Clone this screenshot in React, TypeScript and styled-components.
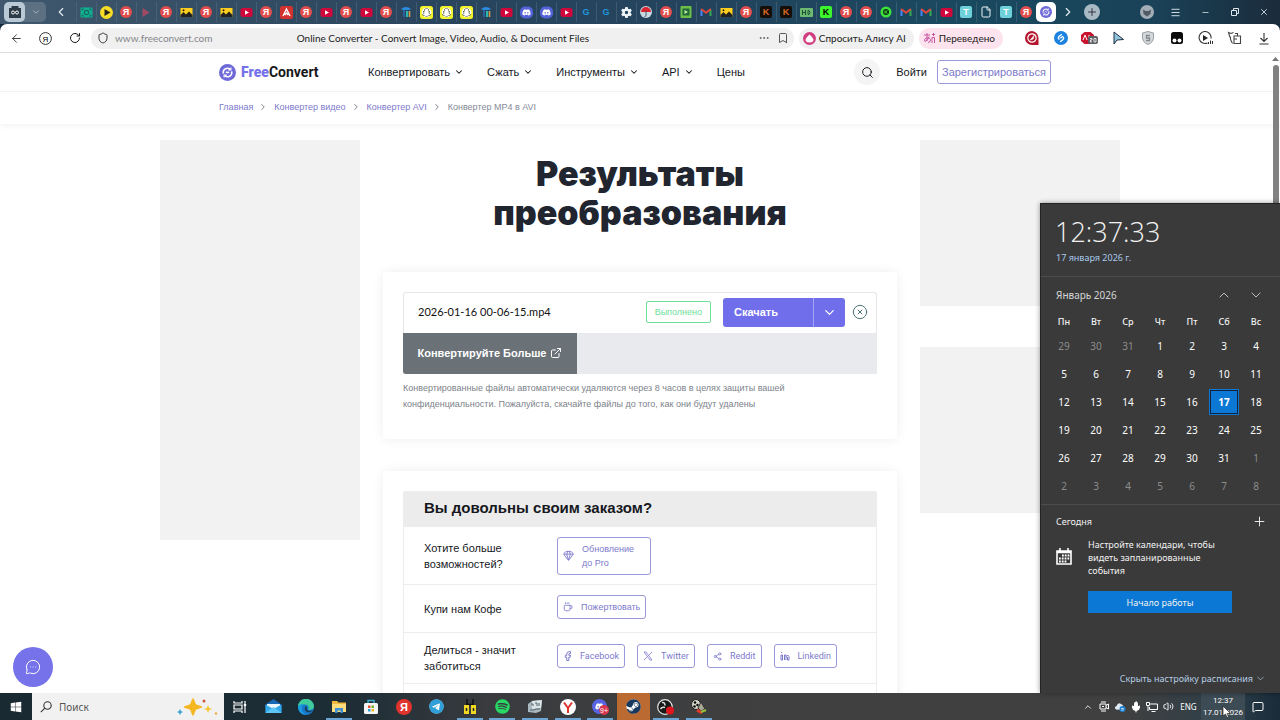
import React from "react";
import styled, { createGlobalStyle, css } from "styled-components";
import {
  ArrowLeft, RotateCw, Shield, Bookmark, ChevronDown, ChevronUp, ChevronLeft, ChevronRight,
  Search, CircleX, ExternalLink, Gem, Coffee, Share2, Plus, X, Menu, Minus, Ellipsis,
  MessageCircleMore, Mic, Volume2, MessageSquare, File,
} from "lucide-react";
import { FaSpotify, FaSteam, FaTelegram, FaDiscord, FaWindows, FaSnapchat, FaGear } from "react-icons/fa6";

const sans = '"Liberation Sans", Arial, sans-serif';
const chrome = 'Lato, Roboto, sans-serif';
const system = '"Noto Sans", "Open Sans", sans-serif';
const violet = "#7572ea";

const GlobalStyle = createGlobalStyle`
  * { box-sizing: border-box; }
  body { margin: 0; background: #fff; font-family: ${sans}; color: #16181d; overflow: hidden; }
  button, input { font: inherit; color: inherit; border: 0; padding: 0; margin: 0; background: none; }
  a { color: inherit; text-decoration: none; }
  h1, h2, p, ul, ol { margin: 0; padding: 0; }
  ul, ol { list-style: none; }
  svg { display: block; flex: none; }
`;

const Desktop = styled.div`
  position: relative;
  height: 100vh;
  display: flex;
  flex-direction: column;
`;

/* ---------- browser chrome ---------- */

const TabStrip = styled.div`
  height: 24px;
  flex: none;
  display: flex;
  align-items: center;
  color: #dfe8ee;
  background: linear-gradient(90deg, #40586d 0, #2b465e 30%, #23435d 55%, #19495f 76%, #1a4258 90%, #1b2c3c 100%);
`;
const TabGroup = styled.div`
  display: flex;
  margin-left: 4px;
  height: 20px;
  border-radius: 5px;
  background: #5b7083;
`;
const GroupButton = styled.button<{ $lit?: boolean }>`
  width: 21px;
  height: 20px;
  display: grid;
  place-items: center;
  border-radius: 5px;
  background: ${(p) => (p.$lit ? "#b9c9d6" : "transparent")};
`;
const StripButton = styled.button<{ $w: number }>`
  width: ${(p) => p.$w}px;
  height: 22px;
  display: grid;
  place-items: center;
`;
const Tabs = styled.div`
  display: flex;
  height: 24px;
  align-items: center;
`;
const Tab = styled.button<{ $active?: boolean }>`
  width: 20px;
  height: 20px;
  display: grid;
  place-items: center;
  ${(p) => p.$active
    ? css`background: #fff; border-radius: 5px;`
    : css`box-shadow: inset 1px 0 #55708480;`}
`;
const NewTab = styled.button`
  width: 16px;
  height: 16px;
  margin: 0 8px 0 4px;
  border-radius: 50%;
  background: #a9bac4;
  color: #334;
  display: grid;
  place-items: center;
`;
const WindowControls = styled.div`
  margin-left: auto;
  margin-right: 1px;
  display: flex;
  align-items: center;
`;
const Letter = styled.span<{ $bg: string; $fg?: string; $round?: boolean }>`
  width: 12px;
  height: 12px;
  display: grid;
  place-items: center;
  border-radius: ${(p) => (p.$round ? "50%" : "2px")};
  background: ${(p) => p.$bg};
  color: ${(p) => p.$fg ?? "#fff"};
  font: 700 9px/12px ${sans};
`;

const ToolbarBack = styled.div`
  flex: none;
  background: #14283c;
`;
const Toolbar = styled.div`
  height: 29px;
  display: flex;
  align-items: center;
  padding: 0 2px;
  background: #fff;
  border-bottom: 1px solid #dedede;
  border-radius: 7px 7px 0 0;
  font: 10px/16px ${chrome};
  color: #1b1b1b;
`;
const ToolButton = styled.button`
  width: 29px;
  height: 22px;
  display: grid;
  place-items: center;
`;
const AddressBar = styled.div`
  flex: 1;
  min-width: 0;
  height: 21px;
  margin-left: 2px;
  padding: 0 5px 0 6px;
  display: grid;
  grid-template-columns: 1fr auto 1fr;
  align-items: center;
  border-radius: 10px;
  background: #f0f0f0;
`;
const AddressStart = styled.label`
  display: flex;
  align-items: center;
  gap: 6px;
`;
const Url = styled.input`
  width: 120px;
  color: #85878a;
  outline: none;
`;
const AddressEnd = styled.div`
  display: flex;
  justify-content: flex-end;
  align-items: center;
  gap: 7px;
`;
const Pill = styled.button<{ $bg: string }>`
  height: 21px;
  margin-left: 5px;
  padding: 0 8px 0 4px;
  display: flex;
  align-items: center;
  gap: 3px;
  border-radius: 10px;
  white-space: nowrap;
  background: ${(p) => p.$bg};
`;
const Extensions = styled.div`
  display: flex;
  margin-left: 14px;
`;

/* ---------- web page ---------- */

const Page = styled.div`
  position: relative;
  flex: 1;
  min-height: 0;
  overflow: hidden;
  background: #fff;
`;
const ScrollTrack = styled.div`
  position: absolute;
  z-index: 2;
  top: 0;
  right: 1px;
  bottom: 0;
  width: 7px;
  display: flex;
  flex-direction: column;
  align-items: center;
  padding-top: 4px;
  gap: 4px;
`;
const ScrollThumb = styled.div`
  width: 6px;
  height: 200px;
  border-radius: 3px;
  background: #828282;
`;
const Container = styled.div`
  width: 100%;
  max-width: 960px;
  margin: 0 auto;
`;
const SiteHeader = styled.header`
  border-bottom: 1px solid #f5f5f6;
`;
const HeaderRow = styled(Container)`
  height: 38px;
  padding: 0 69px 0 59px;
  display: flex;
  align-items: center;
`;
const Logo = styled.a`
  width: 149px;
  display: flex;
  align-items: center;
  gap: 5px;
  font: 700 14px/18px Roboto, sans-serif;
  color: #17171c;
  b { color: ${violet}; }
`;
const Nav = styled.nav`
  display: flex;
  gap: 23px;
  font-size: 11px;
  line-height: 16px;
`;
const NavItem = styled.button`
  display: flex;
  align-items: center;
  gap: 4px;
`;
const Account = styled.div`
  margin-left: auto;
  display: flex;
  align-items: center;
  font-size: 11px;
`;
const RoundButton = styled.button`
  width: 26px;
  height: 26px;
  border-radius: 50%;
  display: grid;
  place-items: center;
  background: #f4f4f4;
`;
const LoginLink = styled.a`
  margin: 0 10px 0 16px;
`;
const OutlineButton = styled.button<{ $large?: boolean; $latin?: boolean }>`
  display: inline-flex;
  align-items: center;
  gap: 8px;
  padding: 4px ${(p) => (p.$large ? 4 : 5)}px;
  min-height: 24px;
  border: 1px solid #9a98d8;
  border-radius: 3px;
  color: #7d7acb;
  background: #fff;
  font-family: ${(p) => (p.$latin ? "Roboto, sans-serif" : "inherit")};
  font-size: ${(p) => (p.$large ? 11 : 9)}px;
  line-height: 14px;
  text-align: left;
`;
const Crumbs = styled.nav`
  box-shadow: 0 2px 6px #0000000d;
`;
const CrumbRow = styled.ol`
  max-width: 960px;
  height: 32px;
  margin: 0 auto;
  padding: 0 0 2px 59px;
  display: flex;
  align-items: center;
  font-size: 9px;
  color: #7d7acb;
  li { display: flex; align-items: center; gap: 5px; margin-right: 6px; }
  li:last-child { color: #858b97; }
  svg { color: #666b76; }
`;
const Columns = styled(Container)`
  display: grid;
  grid-template-columns: 200px minmax(0, 1fr) 200px;
  column-gap: 23px;
  padding-top: 16px;
`;
const AdColumn = styled.aside`
  display: flex;
  flex-direction: column;
  gap: 41px;
`;
const Ad = styled.div<{ $h: number }>`
  height: ${(p) => p.$h}px;
  background: #f2f2f2;
`;
const Title = styled.h1`
  margin: 14px auto 40px;
  max-width: 400px;
  text-align: center;
  font: 900 34px/39px Inter, sans-serif;
  color: #21252f;
`;
const Card = styled.section`
  margin-bottom: 32px;
  padding: 20px 20px 27px;
  border-radius: 4px;
  background: #fff;
  box-shadow: 0 0 12px #00000012;
`;
const FileRow = styled.div`
  height: 41px;
  padding: 0 8px 2px 14px;
  display: flex;
  align-items: center;
  border: 1px solid #e6e6ea;
  border-bottom: 0;
  border-radius: 3px 3px 0 0;
`;
const FileName = styled.span`
  flex: 1;
  font: 11px/16px ${chrome};
  color: #111;
`;
const Status = styled.span`
  padding: 3px 8px;
  border: 1px solid #6ee09a;
  border-radius: 2px;
  color: #6ee09a;
  font-size: 9px;
  line-height: 14px;
`;
const SplitButton = styled.div`
  display: flex;
  width: 122px;
  height: 29px;
  margin: 0 7px 0 12px;
  border-radius: 3px;
  overflow: hidden;
  background: #716eeb;
  color: #fff;
  font-size: 11px;
  font-weight: 700;
`;
const DownloadButton = styled.button`
  flex: 1;
  padding-left: 11px;
  text-align: left;
`;
const DownloadMenu = styled.button`
  width: 32px;
  display: grid;
  place-items: center;
  border-left: 1px solid #a5a3f2;
`;
const MoreBar = styled.div`
  background: #e8eaee;
`;
const MoreButton = styled.button`
  height: 41px;
  width: 174px;
  display: flex;
  align-items: center;
  justify-content: center;
  gap: 4px;
  padding-bottom: 2px;
  background: #6a7278;
  color: #fff;
  font-size: 11px;
  font-weight: 700;
  border-bottom-left-radius: 3px;
`;
const Note = styled.p`
  margin-top: 6px;
  max-width: 420px;
  font-size: 9px;
  line-height: 16px;
  color: #7c828a;
`;
const Survey = styled.div`
  border: 1px solid #ececee;
  border-top: 0;
  border-radius: 3px 3px 0 0;
`;
const SurveyTitle = styled.h2`
  height: 36px;
  padding-left: 20px;
  background: #ececec;
  font-size: 15px;
  line-height: 34px;
  color: #16181d;
`;
const SurveyRow = styled.div<{ $h: number }>`
  min-height: ${(p) => p.$h}px;
  padding-left: 20px;
  display: grid;
  grid-template-columns: 133px 1fr;
  align-items: center;
  border-bottom: 1px solid #ececee;
  font-size: 11px;
  line-height: 16px;
`;
const SurveyLabel = styled.span`
  max-width: 100px;
`;
const Actions = styled.div<{ $raised?: boolean }>`
  display: flex;
  gap: 12px;
  padding-bottom: ${(p) => (p.$raised ? 4 : 0)}px;
`;
const ProText = styled.span`
  width: 63px;
`;
const ChatButton = styled.button`
  position: absolute;
  left: 13px;
  bottom: 6px;
  width: 40px;
  height: 40px;
  border-radius: 50%;
  display: grid;
  place-items: center;
  background: ${violet};
  color: #fff;
`;

/* ---------- calendar flyout ---------- */

const Flyout = styled.section`
  position: absolute;
  z-index: 3;
  right: 0;
  bottom: 27px;
  width: 240px;
  height: 490px;
  display: flex;
  flex-direction: column;
  background: #3a3a3a;
  color: #f2f2f2;
  font: 9px/13px ${system};
  border-left: 1px solid #232323;
  border-top: 1px solid #232323;
  box-shadow: 0 0 5px #0006;
`;
const ClockHead = styled.div`
  height: 73px;
  padding: 10px 14px 0;
  border-bottom: 1px solid #4d4d4d;
`;
const BigTime = styled.div`
  font: 300 27px/36px "Open Sans", sans-serif;
`;
const LongDate = styled.a`
  display: block;
  padding: 1px;
  color: #a9c9ea;
`;
const MonthBar = styled.div`
  height: 36px;
  padding: 0 8px 0 15px;
  display: flex;
  align-items: center;
  color: #d5d5d5;
  font-size: 10px;
`;
const MonthName = styled.button`
  margin-right: auto;
`;
const IconButton = styled.button<{ $w?: number }>`
  width: ${(p) => p.$w ?? 32}px;
  height: 24px;
  display: grid;
  place-items: center;
`;
const Calendar = styled.table`
  width: 224px;
  margin: 0 8px 4px 7px;
  table-layout: fixed;
  border-collapse: collapse;
  text-align: center;
  th { height: 19px; padding: 0 0 2px; font-weight: 500; }
  td { height: 28px; padding: 0; font-size: 10px; }
`;
const Day = styled.button<{ $dim?: boolean; $today?: boolean }>`
  width: 28px;
  height: 24px;
  color: ${(p) => (p.$dim ? "#8c8c8c" : "#fff")};
  ${(p) => p.$today && css`
    background: #0a78d4;
    border: 1px solid #14233a;
    outline: 1px solid #0a78d4;
    font-weight: 700;
  `}
`;
const Agenda = styled.div`
  flex: 1;
  display: flex;
  flex-direction: column;
  border-top: 1px solid #4d4d4d;
`;
const AgendaHead = styled.div`
  height: 33px;
  padding: 0 6px 0 15px;
  display: flex;
  align-items: center;
  justify-content: space-between;
`;
const AgendaBody = styled.div`
  display: grid;
  grid-template-columns: 32px 144px;
  padding-left: 15px;
  row-gap: 14px;
  svg { margin-top: 10px; }
  p { max-width: 132px; }
`;
const StartButton = styled.button`
  grid-column: 2;
  height: 22px;
  background: #0a78d4;
`;
const HideLink = styled.button`
  margin: auto 14px 8px auto;
  display: flex;
  align-items: center;
  gap: 2px;
  color: #b5cde4;
`;

/* ---------- taskbar ---------- */

const Taskbar = styled.footer`
  position: relative;
  flex: none;
  height: 27px;
  display: flex;
  background: linear-gradient(90deg, #192a33 0, #1d2d36 27%, #393b3e 38%, #404040 60%, #404040 88%, #2d3f4a 96%, #182b38 100%);
  color: #fff;
  font: 9px/12px ${system};
`;
const StartMenu = styled.button`
  width: 32px;
  display: grid;
  place-items: center;
`;
const SearchBox = styled.label`
  width: 192px;
  padding: 0 6px 0 8px;
  display: flex;
  align-items: center;
  gap: 7px;
  background: #f1f1f1;
  color: #333;
  input { flex: 1; min-width: 0; font-size: 10px; outline: none; }
  input::placeholder { color: #555; opacity: 1; }
`;
const Apps = styled.div`
  display: flex;
  width: 491px;
`;
const AppButton = styled.button<{ $open?: boolean; $alert?: boolean }>`
  display: flex;
  flex: 1;
  flex-direction: column;
  justify-content: center;
  align-items: center;
  background: ${(p) => (p.$alert ? "#bb6a31" : "transparent")};
  ${(p) => p.$open && css`
    background: linear-gradient(#6aa5d5, #6aa5d5) center bottom / 26px 2px no-repeat;
  `}
`;
const Tray = styled.div`
  margin-left: auto;
  display: flex;
  align-items: stretch;
`;
const TrayIcon = styled.button`
  width: 16px;
  display: grid;
  place-items: center;
`;
const Lang = styled.button`
  width: 25px;
  font-size: 8px;
`;
const Clock = styled.button`
  width: 44px;
  font: 8px/12px Roboto, sans-serif;
  white-space: nowrap;
  display: flex;
  flex-direction: column;
  align-items: center;
  justify-content: center;
  background: #3d4b54;
`;
const ActionCenter = styled.button`
  width: 35px;
  padding-right: 9px;
  display: grid;
  place-items: center;
`;
const Pointer = styled.svg`
  position: absolute;
  right: 48px;
  bottom: 2px;
`;

/* ---------- drawings ---------- */

const ConvertMark = ({ size = 17 }: { size?: number }) => (
  <svg width={size} height={size} viewBox="0 0 18 18">
    <circle cx="9" cy="9" r="9" fill="#6d69d8" />
    <g fill="none" stroke="#fff" strokeWidth="1.6">
      <path d="M4.600 10.200A4.600 4.600 0 0 1 11.800 5.400M13.400 7.800A4.600 4.600 0 0 1 6.200 12.600" />
      <path d="M12.600 3.600v2.600h-2.800M5.400 14.400v-2.600h2.800M7.200 9.400l1.200-1.200 1 1.200 1.400-1.200" strokeWidth="1.200" />
    </g>
  </svg>
);
const YaMark = () => <Letter $bg="#e14d4c" $round>Я</Letter>;
const Tube = () => (
  <svg width="13" height="13" viewBox="0 0 13 13"><rect x=".5" y="2" width="12" height="9" rx="2.5" fill="#d1063a" /><path d="M5 4.300v4.400l4-2.200z" fill="#fff" /></svg>
);
const Mountains = () => (
  <svg width="13" height="13" viewBox="0 0 13 13"><rect x=".5" y="2" width="12" height="9" fill="#ffcd1c" /><path d="M.5 11V9l3-3 2.500 2.500L9 5.500l3.500 3.500v2z" fill="#222" /><circle cx="3.500" cy="4.300" r="1" fill="#222" /></svg>
);
const Ghost = () => (
  <svg width="13" height="13" viewBox="0 0 13 13"><rect width="13" height="13" rx="2.500" fill="#f2f32a" /><circle cx="6.500" cy="6.500" r="4.800" fill="#fff" /><FaSnapchat x={2} y={2} size={9} color="#33350c" /></svg>
);
const Mail = () => (
  <svg width="12" height="12" viewBox="0 0 12 12"><path d="M1.500 10V3.500" stroke="#4285f4" strokeWidth="2" /><path d="M10.500 10V3.500" stroke="#34a853" strokeWidth="2" /><path d="M1.200 3 6 6.800 10.800 3" fill="none" stroke="#e2463b" strokeWidth="2" /></svg>
);
const Bars = () => (
  <svg width="12" height="12" viewBox="0 0 12 12"><path d="M1 3Q6-1 11 3l-2 1H3z" fill="#2a8be0" /><path d="M4 4v7" stroke="#27639f" strokeWidth="2" /><path d="M7 5v6" stroke="#2cb7b0" strokeWidth="2" /><path d="M9.500 5v6" stroke="#d59f4a" strokeWidth="1.600" /></svg>
);
const Discord = () => (
  <svg width="13" height="13" viewBox="0 0 13 13"><rect y=".5" width="13" height="12" rx="5" fill="#5663d8" /><FaDiscord x={2} y={2} size={9} color="#fff" /></svg>
);
const Money = () => (
  <svg width="13" height="13" viewBox="0 0 13 13"><rect x=".5" y="1.500" width="12" height="10" rx="1" fill="#11b090" /><path d="M2 4.500V3h2M2 8.500V10h2M11 4.500V3H9M11 8.500V10H9" fill="none" stroke="#146a63" /><circle cx="6.500" cy="6.500" r="2.200" fill="none" stroke="#146a63" strokeWidth="1.200" /></svg>
);
const PlayDisc = () => (
  <svg width="13" height="13" viewBox="0 0 13 13"><circle cx="6.500" cy="6.500" r="6.500" fill="#f6dc27" /><path d="M4.500 3v7l6-3.500z" fill="#222" /></svg>
);
const DimPlay = () => (
  <svg width="13" height="13" viewBox="0 0 13 13"><path d="M2.500 2v9l7-4.500z" fill="#a04a66" /></svg>
);
const RedA = () => (
  <svg width="13" height="13" viewBox="0 0 13 13"><rect width="13" height="13" rx="2.500" fill="#d4322f" /><path d="M3 10 6.500 3 10 10M4.800 9l1.700-2 1.700 2" fill="none" stroke="#fff" strokeWidth="1.400" /></svg>
);
const Umbrella = () => (
  <svg width="12" height="12" viewBox="0 0 12 12"><circle cx="6" cy="6" r="6" fill="#c9d9e2" /><path d="M1 6a5 5 0 0 1 10 0z" fill="#d9252f" /><path d="M6 5v4.500q0 1-1.500 1" fill="none" stroke="#456" /></svg>
);
const GreenVideo = () => (
  <svg width="12" height="12" viewBox="0 0 12 12"><rect x=".5" width="11" height="12" rx="1" fill="#6cc04a" /><rect x="2.500" y="2.500" width="7" height="7" fill="#22663a" /><path d="M4.500 4v4L8 6z" fill="#bff09a" /></svg>
);
const KickDark = () => <Letter $bg="#150d08" $fg="#d8692a">K</Letter>;
const TealT = () => <Letter $bg="#6ed0da">T</Letter>;
const BlueG = () => <Letter $bg="transparent" $fg="#1f95dc">G</Letter>;
const Hd = () => (
  <svg width="13" height="13" viewBox="0 0 13 13"><rect y="2" width="13" height="9" rx="1" fill="#6cba72" /><path d="M2.500 4v5M5.500 4v5M2.500 6.500h3M8 4.500v4h1q2-2 0-4z" stroke="#1b5034" fill="none" /></svg>
);
const GreenDisc = () => (
  <svg width="12" height="12" viewBox="0 0 12 12"><circle cx="6" cy="6" r="5.500" fill="#3be33b" /><circle cx="6" cy="6" r="3" fill="#102a12" /><path d="M5 4.500v3M7.500 4.500 5.500 6l2 1.500" stroke="#3be33b" fill="none" /></svg>
);

const tabIcons: React.ComponentType[] = [
  Money, PlayDisc, YaMark, DimPlay, YaMark, Mountains, YaMark, Mountains, Tube, YaMark, RedA, YaMark, Tube, YaMark,
  Tube, YaMark, Bars, Ghost, Ghost, Ghost, Bars, Tube, Discord, Discord, Tube, BlueG, BlueG,
  () => <FaGear size={11} color="#f0f5f8" />, Umbrella, YaMark, GreenVideo, Mail, Mountains, YaMark,
  KickDark, KickDark, Hd, () => <Letter $bg="#3df52c" $fg="#000">K</Letter>, YaMark, YaMark, GreenDisc,
  Mail, Mail, Tube, TealT, () => <File size={12} color="#eef3f6" />, TealT, YaMark,
];

const extensions: [string, React.ReactNode][] = [
  ["Блокировщик", <svg width="14" height="14" viewBox="0 0 14 14"><path d="M7 0a7 7 0 1 0 0 14h6.500V7A7 7 0 0 0 7 0z" fill="#b5142c" /><circle cx="7" cy="7" r="4.200" fill="none" stroke="#fff" strokeWidth="1.200" /><path d="M5.200 9 9 4.500 8.200 8z" fill="#fff" stroke="#fff" strokeWidth=".6" /></svg>],
  ["Shazam", <svg width="14" height="14" viewBox="0 0 14 14"><circle cx="7" cy="7" r="7" fill="#1b82e0" /><path d="M7.800 3.200 5 5.500Q3.500 7.200 5.500 8.500M6.200 10.800 9 8.500Q10.500 6.800 8.500 5.500L6.300 7.200" fill="none" stroke="#fff" strokeWidth="1.400" /></svg>],
  ["Adblock", <svg width="17" height="14" viewBox="0 0 17 14"><path d="M3.500 1h6L13 4v6l-3.500 3h-6L0 10V4z" fill="#c9142d" /><path d="m2 9 2-5 2 5M8 4v5" stroke="#fff" fill="none" /><rect x="7" y="5" width="10" height="8" rx="2" fill="#5d6064" /><path d="M9 7.500h2v1.500H9.500V11H11M13 7.500h2V11h-2z" stroke="#fff" fill="none" strokeWidth=".8" /></svg>],
  ["Курсор", <svg width="13" height="14" viewBox="0 0 13 14"><path d="M2 1v12l3-4 6.500-.5z" fill="#8ec5dc" stroke="#1f2d45" /></svg>],
  ["Защита", <svg width="14" height="14" viewBox="0 0 14 14"><path d="M7 .5 12.500 2v5Q12 11.500 7 13.500 2 11.500 1.500 7V2z" fill="#d5d8db" stroke="#9a9ea3" /><path d="M9 4.500H5.500V7h3v2.500H5" fill="none" stroke="#83888d" strokeWidth="1.300" /></svg>],
  ["Tampermonkey", <svg width="14" height="14" viewBox="0 0 14 14"><rect x="1" y="1" width="12" height="12" rx="2.500" fill="#0b0b0b" /><circle cx="4.500" cy="9.500" r="2" fill="#fff" /><circle cx="9.500" cy="9.500" r="2" fill="#fff" /></svg>],
  ["Музыка", <svg width="15" height="14" viewBox="0 0 15 14"><path d="M9.500 12A6 6 0 1 1 13 7.500" fill="none" stroke="#333" strokeWidth="1.100" /><path d="M5 4v6l5-3z" fill="#222" /><path d="M10.500 13v-2M12.500 13V9.500M14.500 13v-3" stroke="#333" /></svg>],
  ["Расширения", <svg width="15" height="14" viewBox="0 0 15 14"><path d="M6.500 1.500 4 2.500 1.500 1.500 2.500 5Q4 6.500 3.500 8.500L5.500 12.500M7 5h6.500v7.500H7zM7 8h3M10.500 5V2.500H8" fill="none" stroke="#444" strokeWidth="1.100" /></svg>],
  ["Загрузки", <svg width="12" height="14" viewBox="0 0 12 14"><path d="M6 2v8.500M2.500 7 6 10.500 9.500 7M1.500 13h9" fill="none" stroke="#333" strokeWidth="1.100" /></svg>],
];

const weekdays = ["Пн", "Вт", "Ср", "Чт", "Пт", "Сб", "Вс"];
const weeks = Array.from({ length: 6 }, (_, w) =>
  Array.from({ length: 7 }, (_, d) => {
    const n = w * 7 + d - 2;
    return { n: n < 1 ? n + 31 : n > 31 ? n - 31 : n, dim: n < 1 || n > 31 };
  }),
);

type AppEntry = { name: string; icon: React.ReactNode; open?: boolean; alert?: boolean };
const apps: AppEntry[] = [
  { name: "Представление задач", icon: <svg width="14" height="12" viewBox="0 0 14 12"><path d="M1 0v2h8V0M1 12v-2h8v2M1 4h8v4H1zM12 0v12" fill="none" stroke="#fff" strokeWidth="1.200" /><path d="M10.800 4h2.400" stroke="#fff" strokeWidth="2" /></svg> },
  { name: "Почта", icon: <svg width="17" height="15" viewBox="0 0 17 15"><path d="M.5 5.500 8.500 0l8 5.500V14H.5z" fill="#1769b8" /><path d="M2 5h13v6H2z" fill="#e9f6fd" /><path d="M.5 5.500 8.500 10l8-4.500V14H.5z" fill="#34a9ea" /><path d="m.5 14 8-6 8 6z" fill="#5cc7f5" /></svg> },
  { name: "Edge", icon: <svg width="16" height="16" viewBox="0 0 16 16"><circle cx="8" cy="8" r="8" fill="#1878c9" /><path d="M0 8a8 8 0 0 1 16-.5c0 3-3.500 3.800-6 3 1.500-2 .5-5-3-5C4 5.500 1 6.500 0 8z" fill="#3fcb9a" /><path d="M0 8c1-2.500 3.500-3.500 6-3-3.500 2-3 8 1.500 11A8 8 0 0 1 0 8z" fill="#1b9be0" /><path d="M7 7.500q2-.5 2 1.500-.5 1.500.5 2 2.500 2 5 0-1 2-3 2.500Q5.500 13 7 7.500z" fill="#17405e" /></svg> },
  { name: "Проводник", open: true, icon: <svg width="16" height="14" viewBox="0 0 16 14"><path d="M1 1h5l1.500 1.500H15V12H1z" fill="#eeb83f" /><path d="M1 4h14v8H1z" fill="#fbdc7c" /><path d="M4 13V8h8v5h-2.500v-2.500h-3V13z" fill="#3f8fd4" /></svg> },
  { name: "Магазин", icon: <svg width="16" height="16" viewBox="0 0 16 16"><path d="M5 4V1.500h6V4" fill="none" stroke="#3db4d8" strokeWidth="1.300" /><rect x="1" y="4" width="14" height="11" rx="1.500" fill="#f5f5f5" /><path d="M5 6.500h2.500V9H5z" fill="#e4502c" /><path d="M8.500 6.500H11V9H8.500z" fill="#73b02c" /><path d="M5 10h2.500v2.500H5z" fill="#2a9fdb" /><path d="M8.500 10H11v2.500H8.500z" fill="#f0b323" /></svg> },
  { name: "Яндекс", icon: <svg width="16" height="16" viewBox="0 0 16 16"><circle cx="8" cy="8" r="8" fill="#e0342d" /><text x="8" y="12" textAnchor="middle" fill="#fff" fontFamily="Liberation Sans" fontWeight="700" fontSize="11">Я</text></svg> },
  { name: "Telegram", icon: <svg width="15" height="15" viewBox="0 0 15 15"><circle cx="7.500" cy="7.500" r="7" fill="#fff" /><FaTelegram size={15} color="#319fd8" /></svg> },
  { name: "Бинокль", open: true, icon: <svg width="14" height="15" viewBox="0 0 14 15"><path d="M4 0v6M10 0v6M3 5.500h8" stroke="#111" strokeWidth="1.500" /><rect x="1" y="6" width="5" height="9" fill="#f1d822" /><rect x="8" y="6" width="5" height="9" fill="#f1d822" /><path d="M3.500 9v3M10.500 9v3" stroke="#222" strokeWidth="1.500" /></svg> },
  { name: "Spotify", open: true, icon: <FaSpotify size={15} color="#27d865" /> },
  { name: "Игра", open: true, icon: <svg width="16" height="15" viewBox="0 0 16 15"><path d="m1 5 4-3 10-1-1 11-5 2-8-1z" fill="#a9b8bf" /><path d="m5 2 10-1-1 8-9 1z" fill="#dbe5e8" /><path d="M4 5h2v2M8 4h2v3M12 4v3M3 11h4l2-1h4" fill="none" stroke="#53636b" /></svg> },
  { name: "Яндекс Браузер", open: true, icon: <svg width="16" height="16" viewBox="0 0 16 16"><circle cx="8" cy="8" r="8" fill="#fff" /><path d="M4 3.500 8 9v5M12 3.500 8 9" fill="none" stroke="#e0342d" strokeWidth="2" /></svg> },
  { name: "Discord", open: true, icon: <svg width="17" height="16" viewBox="0 0 17 16"><circle cx="7.500" cy="7.500" r="7.500" fill="#5865e2" /><FaDiscord x={3} y={3} size={9} color="#fff" /><circle cx="12" cy="11" r="5" fill="#d8374f" /><text x="12" y="13.500" textAnchor="middle" fill="#fff" fontFamily="Liberation Sans" fontSize="7">9+</text></svg> },
  { name: "Steam", alert: true, icon: <svg width="15" height="15" viewBox="0 0 15 15"><circle cx="7.500" cy="7.500" r="7.200" fill="#fff" /><FaSteam size={15} color="#17375d" /></svg> },
  { name: "OBS", open: true, icon: <svg width="17" height="16" viewBox="0 0 17 16"><circle cx="8" cy="8" r="7.300" fill="#181818" stroke="#e8e8e8" strokeWidth="1.200" /><path d="M5 3.500q3-.5 3 3M3.500 10Q5 7.500 8 8.500" fill="none" stroke="#ddd" strokeWidth="1.500" /><circle cx="13" cy="11.500" r="4" fill="#e1161c" /></svg> },
  { name: "Редактор", open: true, icon: <svg width="17" height="16" viewBox="0 0 17 16"><ellipse cx="6" cy="5.500" rx="4.500" ry="5" fill="#d5d5c8" stroke="#222" /><circle cx="5" cy="3.500" r="1.200" /><circle cx="7.500" cy="6" r="1.200" /><circle cx="4.500" cy="7.500" r="1.200" /><path d="m8 9 3-6 4 7-4 2z" fill="#aaa996" stroke="#333" /><path d="m7 11 5 3" stroke="#e13a28" strokeWidth="3" /><path d="m11 13 5-2" stroke="#9ac43a" strokeWidth="2" /></svg> },
];

const NavEntry = ({ label, menu = true }: { label: string; menu?: boolean }) => (
  <NavItem type="button">{label}{menu && <ChevronDown size={10} strokeWidth={2.500} />}</NavItem>
);

export default function App() {
  return (
    <Desktop>
      <GlobalStyle />
      <TabStrip>
        <TabGroup>
          <GroupButton $lit aria-label="Группа вкладок">
            <svg width="12" height="12" viewBox="0 0 12 12"><path d="M2.500 0h7v2H12v10H0V2h2.500z" fill="#2d3c46" /><circle cx="4" cy="6.500" r="1.500" fill="none" stroke="#fff" /><circle cx="8" cy="6.500" r="1.500" fill="none" stroke="#fff" /></svg>
          </GroupButton>
          <GroupButton aria-label="Список групп"><ChevronDown size={10} color="#b0bfca" /></GroupButton>
        </TabGroup>
        <StripButton $w={30} aria-label="Назад по вкладкам"><ChevronLeft size={14} /></StripButton>
        <Tabs>
          {tabIcons.map((Icon, i) => <Tab key={i} aria-label={`Вкладка ${i + 1}`}><Icon /></Tab>)}
          <Tab $active aria-label="FreeConvert"><ConvertMark size={12} /></Tab>
        </Tabs>
        <StripButton $w={24} aria-label="Вперёд по вкладкам"><ChevronRight size={14} /></StripButton>
        <NewTab aria-label="Новая вкладка"><Plus size={12} /></NewTab>
        <WindowControls>
          <StripButton $w={29} aria-label="Профиль">
            <svg width="14" height="14" viewBox="0 0 14 14"><circle cx="7" cy="7" r="7" fill="#a2adb7" /><path d="M3 4.500 5.500 6h3L11 4.500 10.500 9 7 11.500 3.500 9z" fill="#515b67" /></svg>
          </StripButton>
          <StripButton $w={29} aria-label="Меню"><Menu size={11} /></StripButton>
          <StripButton $w={30} aria-label="Свернуть"><Minus size={9} /></StripButton>
          <StripButton $w={29} aria-label="Окно">
            <svg width="8" height="8" viewBox="0 0 8 8"><path d="M.5 2.500h5v5h-5zM2.500 2.500v-2h5v5h-2" fill="none" stroke="currentColor" /></svg>
          </StripButton>
          <StripButton $w={30} aria-label="Закрыть"><X size={10} /></StripButton>
        </WindowControls>
      </TabStrip>

      <ToolbarBack>
        <Toolbar>
          <ToolButton aria-label="Назад"><ArrowLeft size={13} strokeWidth={1.500} /></ToolButton>
          <ToolButton aria-label="Яндекс">
            <svg width="13" height="13" viewBox="0 0 13 13"><circle cx="6.500" cy="6.500" r="5.900" fill="none" stroke="#333" /><text x="6.500" y="9.500" textAnchor="middle" fontFamily="Liberation Sans" fontSize="8">Я</text></svg>
          </ToolButton>
          <ToolButton aria-label="Обновить"><RotateCw size={12} strokeWidth={2} /></ToolButton>
          <AddressBar>
            <AddressStart>
              <Shield size={12} strokeWidth={1.700} />
              <Url aria-label="Адрес" defaultValue="www.freeconvert.com" />
            </AddressStart>
            <span>Online Converter - Convert Image, Video, Audio, &amp; Document Files</span>
            <AddressEnd>
              <Ellipsis size={12} color="#666" />
              <Bookmark size={12} color="#555" />
            </AddressEnd>
          </AddressBar>
          <Pill $bg="#f0f0f0">
            <svg width="13" height="13" viewBox="0 0 13 13"><circle cx="6.500" cy="6.500" r="6.500" fill="#d23f80" /><path d="M6.500 2.500Q10.500 6 10.500 8q-.5 2.500-4 2.500T2.500 8q0-2 4-5.500z" fill="#fff" /></svg>
            Спросить Алису AI
          </Pill>
          <Pill $bg="#fde3ee">
            <svg width="13" height="12" viewBox="0 0 13 12"><path d="M1 3h6M4 1v8M6 4.500Q5 9 2 9.500.5 8 3 6q4-1 4.500 1.500T5 10.500M9 11V5.500h2.500V11M10.500 1v3M9 2.500h3" fill="none" stroke="#c757a4" /></svg>
            Переведено
          </Pill>
          <Extensions>
            {extensions.map(([name, icon]) => <ToolButton key={name} aria-label={name}>{icon}</ToolButton>)}
          </Extensions>
        </Toolbar>
      </ToolbarBack>

      <Page>
        <ScrollTrack>
          <svg width="7" height="4" viewBox="0 0 7 4"><path d="M3.500 0 7 4H0z" fill="#777" /></svg>
          <ScrollThumb />
        </ScrollTrack>
        <SiteHeader>
          <HeaderRow>
            <Logo href="#"><ConvertMark /><span><b>Free</b>Convert</span></Logo>
            <Nav>
              <NavEntry label="Конвертировать" />
              <NavEntry label="Сжать" />
              <NavEntry label="Инструменты" />
              <NavEntry label="API" />
              <NavEntry label="Цены" menu={false} />
            </Nav>
            <Account>
              <RoundButton aria-label="Поиск"><Search size={13} strokeWidth={1.800} /></RoundButton>
              <LoginLink href="#">Войти</LoginLink>
              <OutlineButton $large>Зарегистрироваться</OutlineButton>
            </Account>
          </HeaderRow>
        </SiteHeader>
        <Crumbs aria-label="Навигация">
          <CrumbRow>
            <li><a href="#">Главная</a><ChevronRight size={10} /></li>
            <li><a href="#">Конвертер видео</a><ChevronRight size={10} /></li>
            <li><a href="#">Конвертер AVI</a><ChevronRight size={10} /></li>
            <li>Конвертер MP4 в AVI</li>
          </CrumbRow>
        </Crumbs>
        <Columns>
          <AdColumn><Ad $h={400} /></AdColumn>
          <main>
            <Title>Результаты преобразования</Title>
            <Card>
              <FileRow>
                <FileName>2026-01-16 00-06-15.mp4</FileName>
                <Status>Выполнено</Status>
                <SplitButton>
                  <DownloadButton>Скачать</DownloadButton>
                  <DownloadMenu aria-label="Варианты скачивания"><ChevronDown size={15} /></DownloadMenu>
                </SplitButton>
                <button aria-label="Удалить"><CircleX size={16} strokeWidth={1.500} color="#4c7078" /></button>
              </FileRow>
              <MoreBar>
                <MoreButton>Конвертируйте Больше <ExternalLink size={12} /></MoreButton>
              </MoreBar>
              <Note>Конвертированные файлы автоматически удаляются через 8 часов в целях защиты вашей конфиденциальности. Пожалуйста, скачайте файлы до того, как они будут удалены</Note>
            </Card>
            <Card>
              <Survey>
                <SurveyTitle>Вы довольны своим заказом?</SurveyTitle>
                <SurveyRow $h={58}>
                  <SurveyLabel>Хотите больше возможностей?</SurveyLabel>
                  <Actions><OutlineButton><Gem size={11} /><ProText>Обновление до Pro</ProText></OutlineButton></Actions>
                </SurveyRow>
                <SurveyRow $h={48}>
                  <SurveyLabel>Купи нам Кофе</SurveyLabel>
                  <Actions $raised><OutlineButton><Coffee size={10} />Пожертвовать</OutlineButton></Actions>
                </SurveyRow>
                <SurveyRow $h={51}>
                  <SurveyLabel>Делиться - значит заботиться</SurveyLabel>
                  <Actions $raised>
                    <OutlineButton $latin>
                      <svg width="9" height="10" viewBox="0 0 9 10"><path d="M7.500.7H6Q3.800.7 3.800 3v1.300H2.300v2h1.500v3.200h2V6.300h1.400l.3-2H5.800V3.200q0-.6.700-.6h1z" fill="none" stroke="currentColor" /></svg>
                      Facebook
                    </OutlineButton>
                    <OutlineButton $latin>
                      <svg width="10" height="10" viewBox="0 0 10 10"><path d="M1 1h2l6 8H7zM9 1 5.700 4.500M4.300 5.800 1 9" fill="none" stroke="currentColor" strokeWidth=".8" /></svg>
                      Twitter
                    </OutlineButton>
                    <OutlineButton $latin><Share2 size={9} />Reddit</OutlineButton>
                    <OutlineButton $latin>
                      <svg width="10" height="10" viewBox="0 0 10 10"><path d="M1 4h1.500v5H1zM1.200 1.500h1M4.500 9V4H6v5M6 5.500Q8.500 3 9 5.500V9H7.500V6" fill="none" stroke="currentColor" /></svg>
                      Linkedin
                    </OutlineButton>
                  </Actions>
                </SurveyRow>
                <SurveyRow $h={48} />
              </Survey>
            </Card>
          </main>
          <AdColumn><Ad $h={166} /><Ad $h={166} /></AdColumn>
        </Columns>
        <ChatButton aria-label="Чат"><MessageCircleMore size={16} strokeWidth={1.500} /></ChatButton>
      </Page>

      <Flyout>
        <ClockHead>
          <BigTime>12:37:33</BigTime>
          <LongDate href="#">17 января 2026 г.</LongDate>
        </ClockHead>
        <MonthBar>
          <MonthName>Январь 2026</MonthName>
          <IconButton aria-label="Предыдущий месяц"><ChevronUp size={16} strokeWidth={1.300} /></IconButton>
          <IconButton aria-label="Следующий месяц"><ChevronDown size={16} strokeWidth={1.300} /></IconButton>
        </MonthBar>
        <Calendar>
          <thead><tr>{weekdays.map((d) => <th key={d}>{d}</th>)}</tr></thead>
          <tbody>
            {weeks.map((week, w) => (
              <tr key={w}>
                {week.map(({ n, dim }) => (
                  <td key={n}><Day $dim={dim} $today={n === 17 && !dim}>{n}</Day></td>
                ))}
              </tr>
            ))}
          </tbody>
        </Calendar>
        <Agenda>
          <AgendaHead>Сегодня<IconButton $w={30} aria-label="Добавить событие"><Plus size={15} strokeWidth={1.500} /></IconButton></AgendaHead>
          <AgendaBody>
            <svg width="16" height="17" viewBox="0 0 16 17"><path d="M1 3h14v13H1zM4 0v4M12 0v4M1 4.500h14" fill="none" stroke="#fff" strokeWidth="1.600" /><path d="M6 7.500h8M3 10.500h11M3 13.500h8" stroke="#fff" strokeWidth="1.800" strokeDasharray="1.800 1" /></svg>
            <p>Настройте календари, чтобы видеть запланированные события</p>
            <StartButton>Начало работы</StartButton>
          </AgendaBody>
          <HideLink>Скрыть настройку расписания<ChevronDown size={11} strokeWidth={1.500} /></HideLink>
        </Agenda>
      </Flyout>

      <Taskbar>
        <StartMenu aria-label="Пуск"><FaWindows size={12} /></StartMenu>
        <SearchBox>
          <svg width="12" height="12" viewBox="0 0 12 12"><circle cx="7.500" cy="4.500" r="3.700" fill="none" stroke="#333" strokeWidth="1.100" /><path d="M4.800 7.200.8 11.200" stroke="#333" strokeWidth="1.100" /></svg>
          <input placeholder="Поиск" aria-label="Поиск" />
          <svg width="42" height="18" viewBox="0 0 42 18"><path d="m17 1 2.500 6 6 2-6 2L17 17l-2.500-6-6-2 6-2z" fill="#f5b722" stroke="#f5b722" strokeWidth="1.500" strokeLinejoin="round" /><path d="m32 7 1.200 3 3 1-3 1-1.200 3-1.200-3-3-1 3-1z" fill="#f7c531" /><path d="m4 11 1 2 2 1-2 1-1 2-1-2-2-1 2-1z" fill="#3ba2cc" /><circle cx="28" cy="3" r="1.500" fill="#cf5535" /><circle cx="40" cy="15.500" r="1.200" fill="#e7b23f" /></svg>
        </SearchBox>
        <Apps>
          {apps.map((a) => <AppButton key={a.name} aria-label={a.name} $open={a.open} $alert={a.alert}>{a.icon}</AppButton>)}
        </Apps>
        <Tray>
          <TrayIcon aria-label="Скрытые значки"><ChevronUp size={10} /></TrayIcon>
          <TrayIcon aria-label="Камера"><svg width="10" height="11" viewBox="0 0 10 11"><path d="M2 1h5M2 10h5M1 3h6v5H1zM7 4.500 9.500 3v5L7 6.500M3 5.500h2" fill="none" stroke="#fff" /></svg></TrayIcon>
          <TrayIcon aria-label="OneDrive"><svg width="12" height="10" viewBox="0 0 12 10"><path d="M2 7.500Q-.5 5 2.500 4 4 0 7 2q2 .5 2.500 2.500L8 8z" fill="#dfeaf2" /><circle cx="8.500" cy="7" r="3" fill="#1d7fd2" /><path d="M7.200 6.500h2.600M7.200 8h2.600" stroke="#fff" strokeWidth=".7" /></svg></TrayIcon>
          <TrayIcon aria-label="Микрофон"><Mic size={12} fill="#fff" /></TrayIcon>
          <TrayIcon aria-label="Сеть"><svg width="12" height="10" viewBox="0 0 12 10"><path d="M4 2h7.500v5.500H3.500V5M5.500 9.500h4M.5.500h3v3h-3zM2 3.500V9" fill="none" stroke="#fff" /></svg></TrayIcon>
          <TrayIcon aria-label="Громкость"><Volume2 size={11} /></TrayIcon>
          <Lang>ENG</Lang>
          <Clock><span>12:37</span><span>17.01.2026</span></Clock>
          <ActionCenter aria-label="Уведомления"><MessageSquare size={12} /></ActionCenter>
        </Tray>
        <Pointer width="10" height="13" viewBox="0 0 10 13"><path d="M1 1v10l2.500-2 1.500 3.500 1.500-.8L5.200 8.500H8.500z" fill="#fff" stroke="#222" strokeWidth=".7" /></Pointer>
      </Taskbar>
    </Desktop>
  );
}
